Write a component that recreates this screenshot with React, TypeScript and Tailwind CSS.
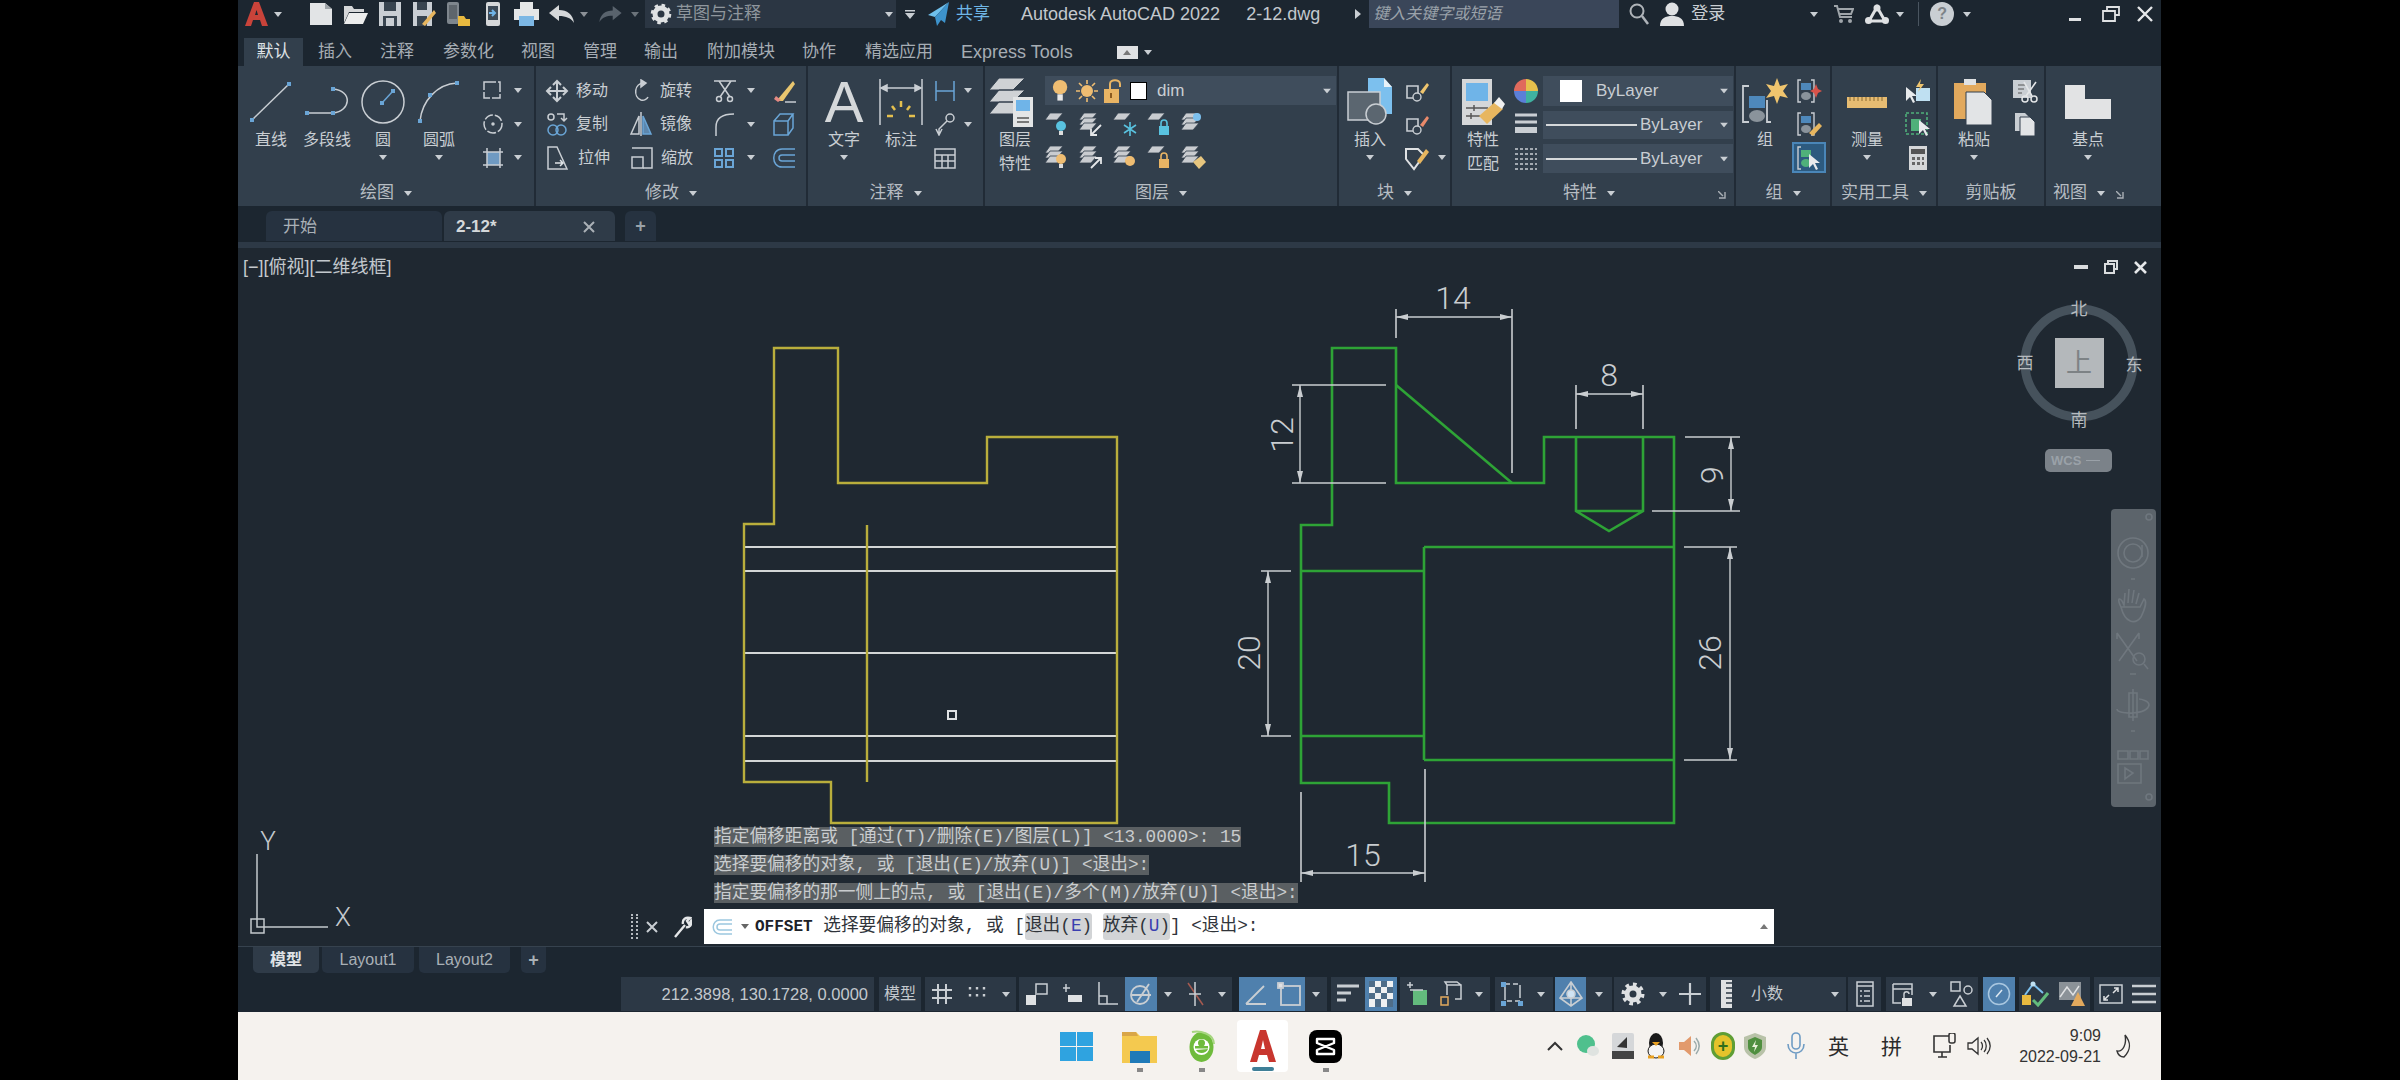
import type { ReactNode } from "react";

const G = "#c9ced3";
const B = "#6aa5d6";

type IcoProps = { w: number; h: number; children: ReactNode; sw?: number };

const Ico = ({ w, h, children, sw = 1.5 }: IcoProps) => (
    <svg width={w} height={h} viewBox={`0 0 ${w} ${h}`} fill="none" stroke={G} strokeWidth={sw} className="shrink-0">
        {children}
    </svg>
);

const Caret = ({ up, c = G }: { up?: boolean; c?: string }) => (
    <svg width="8" height="5" viewBox="0 0 8 5" className="shrink-0">
        <path d={up ? "M0 5 L8 5 L4 0 Z" : "M0 0 L8 0 L4 5 Z"} fill={c} />
    </svg>
);

const Launcher = () => (
    <svg width="8" height="8" viewBox="0 0 8 8" className="shrink-0">
        <path d="M0 0 L5 5 M7 1 L7 7 L1 7" stroke="#aab0b6" strokeWidth="1.4" fill="none" />
    </svg>
);

const Grip = ({ x, y }: { x: number; y: number }) => <rect x={x - 2} y={y - 2} width="4" height="4" fill={B} stroke="none" />;

// ---- draw panel
const LineIco = () => <Ico w={46} h={46}><path d="M4 41 L41 5" /><Grip x={4} y={41} /><Grip x={41} y={5} /></Ico>;
const PolyIco = () => <Ico w={48} h={46}><path d="M4 34 H30 M30 10 C50 12 48 32 30 34" /><Grip x={4} y={34} /><Grip x={30} y={34} /><Grip x={30} y={10} /></Ico>;
const CircleIco = () => <Ico w={46} h={46}><circle cx="23" cy="23" r="21" /><path d="M22 24 L33 12" stroke={B} /><Grip x={22} y={24} /><Grip x={33} y={12} /></Ico>;
const ArcIco = () => <Ico w={44} h={46}><path d="M3 42 C5 22 20 5 40 4" /><Grip x={3} y={42} /><Grip x={13} y={16} /><Grip x={40} y={4} /></Ico>;
const RectIco = () => <Ico w={24} h={24}><path d="M3 3 H19 V19 H3 Z" strokeDasharray="12 2" /></Ico>;
const EllIco = () => <Ico w={24} h={24}><circle cx="12" cy="12" r="9" strokeDasharray="9 2" /><circle cx="12" cy="12" r="1" fill={G} /></Ico>;
const HatchIco = () => <Ico w={24} h={24}><rect x="6" y="6" width="13" height="13" fill="#6f9ac2" stroke="none" /><path d="M2 6 H22 M2 19 H22 M6 2 V22 M19 2 V22" /></Ico>;

// ---- modify panel
const MoveIco = () => <Ico w={24} h={24} sw={2}><path d="M12 2 V22 M2 12 H22 M8 6 L12 2 L16 6 M8 18 L12 22 L16 18 M6 8 L2 12 L6 16 M18 8 L22 12 L18 16" /></Ico>;
const RotateIco = () => <Ico w={24} h={24}><path d="M15 4 C5 4 4 18 12 21 C15 22 18 20 19 18" /><path d="M12 1 L17 4 L12 8 Z" fill={G} /></Ico>;
const TrimIco = () => <Ico w={26} h={24}><path d="M2 2 H24 M7 2 L18 18 M19 2 L8 18" /><circle cx="7" cy="20" r="2.5" /><circle cx="18" cy="20" r="2.5" /></Ico>;
const EraseIco = () => <Ico w={26} h={24}><path d="M7 20 L22 2 L24 5 L12 22 H7 Z" fill="#e9c66f" stroke="none" /><path d="M5 17 L10 21 L7 23 L3 20 Z" fill="#e58a84" stroke="none" /><path d="M14 23 H25" /></Ico>;
const CopyIco = () => <Ico w={24} h={26}><circle cx="6" cy="6" r="3" /><path d="M12 3 H19 V9 M16 7 L19 10 L22 7" /><circle cx="8" cy="19" r="5" stroke={B} /><circle cx="16" cy="19" r="5" stroke={B} /></Ico>;
const MirrorIco = () => <Ico w={24} h={26}><path d="M12 1 V25" /><path d="M10 5 V23 H2 Z" /><path d="M14 5 V23 H22 Z" fill="#5d87ad" stroke={B} /></Ico>;
const FilletIco = () => <Ico w={24} h={26}><path d="M4 25 V16 C4 8 10 3 22 3" /></Ico>;
const SolidIco = () => <Ico w={24} h={26}><path d="M3 10 H17 V24 H3 Z M3 10 L9 3 H22 L17 10 M22 3 V17 L17 24" stroke={B} /></Ico>;
const StretchIco = () => <Ico w={26} h={26}><path d="M3 2 H12 L22 24 H3 Z" /><path d="M10 18 H18 M15 15 L18 18 L15 21" stroke="#dfe3e6" /></Ico>;
const ScaleIco = () => <Ico w={26} h={26}><path d="M3 3 H23 V23 H14" /><rect x="3" y="12" width="11" height="11" /></Ico>;
const ArrayIco = () => <Ico w={24} h={24} sw={2}><g stroke={B}><rect x="3" y="3" width="7" height="7" /><rect x="14" y="3" width="7" height="7" /><rect x="3" y="14" width="7" height="7" /><rect x="14" y="14" width="7" height="7" /></g></Ico>;
const OffsetIco = () => <Ico w={26} h={24}><path d="M24 3 H11 C0 3 0 21 11 21 H24 M24 9 H11 C7 9 7 15 11 15 H24" stroke={B} /></Ico>;

// ---- annotation panel
const DimIco = () => (
    <Ico w={46} h={46}>
        <path d="M2 0 V46 M44 0 V46 M3 9 H43" />
        <path d="M3 9 L9 6 V12 Z M43 9 L37 6 V12 Z" fill={G} />
        <path d="M23 22 V28 M14 27 L17 31 M32 27 L29 31 M9 37 H15 M31 37 H37" stroke="#e5c04e" strokeWidth="2.5" />
    </Ico>
);
const LinDimIco = () => <Ico w={24} h={24}><path d="M3 2 V22 M21 2 V22 M3 12 H21" stroke={B} /></Ico>;
const LeaderIco = () => <Ico w={24} h={24}><circle cx="17" cy="6" r="4" /><path d="M14 9 L6 17 V22 M3 17 L6 23 L9 17" /></Ico>;
const TableIco = () => <Ico w={24} h={24}><path d="M2 3 H22 V22 H2 Z M2 9 H22 M2 15 H22 M9 9 V22 M15 9 V22" /></Ico>;

// ---- layer panel
const LayersBig = () => (
    <svg width="52" height="52" viewBox="0 0 52 52" className="shrink-0">
        <path d="M10 2 H36 L24 14 H0 Z M10 14 H36 L24 26 H0 Z M10 26 H36 L24 38 H0 Z" fill="#cfd2d5" stroke="#323f4c" strokeWidth="1" />
        <rect x="24" y="21" width="20" height="30" fill="#e3e5e6" />
        <rect x="27" y="24" width="14" height="11" fill="#6fb4e8" />
        <path d="M28 42 H40 M28 46 H40" stroke="#555" strokeWidth="1.5" />
    </svg>
);
const Bulb = ({ c = "#efbd72", s = 1 }: { c?: string; s?: number }) => (
    <svg width={18 * s} height={26 * s} viewBox="0 0 18 26" className="shrink-0">
        <circle cx="9" cy="9" r="8" fill={c} />
        <rect x="6" y="17" width="6" height="7" fill="#e8e8e8" />
    </svg>
);
const Sun = () => (
    <svg width="24" height="24" viewBox="0 0 24 24" className="shrink-0">
        <circle cx="12" cy="12" r="6" fill="#efbd72" />
        <path d="M12 1 V5 M12 19 V23 M1 12 H5 M19 12 H23 M4 4 L7 7 M17 17 L20 20 M20 4 L17 7 M7 17 L4 20" stroke="#efbd72" strokeWidth="1.6" />
    </svg>
);
const Lock = ({ c = "#e8b464" }: { c?: string }) => (
    <svg width="22" height="26" viewBox="0 0 22 26" className="shrink-0">
        <rect x="1" y="11" width="15" height="14" fill={c} />
        <path d="M7 11 V6 C7 1 17 1 17 6 V9" stroke={c} strokeWidth="2" fill="none" />
        <rect x="7" y="15" width="2" height="5" fill="#8a5a20" />
    </svg>
);
const Sheets = ({ n = 1 }: { n?: number }) => (
    <g fill="#c9ccd0" stroke="#323f4c" strokeWidth="0.8">
        <path d="M5 2 H18 L12 9 H0 Z" />
        {n > 1 && <path d="M5 7 H18 L12 14 H0 Z" />}
        {n > 2 && <path d="M5 12 H18 L12 19 H0 Z" />}
    </g>
);
const LayerMini = ({ n = 1, children }: { n?: number; children?: ReactNode }) => (
    <svg width="26" height="26" viewBox="0 0 26 26" className="shrink-0">
        <Sheets n={n} />
        {children}
    </svg>
);

const MiniBulb = ({ c }: { c: string }) => <><circle cx="16" cy="15" r="5" fill={c} /><rect x="14" y="20" width="4" height="4" fill="#ddd" /></>;
const MiniArrow = ({ up }: { up?: boolean }) => <path d={up ? "M12 24 L22 14 M16 14 H22 V20" : "M22 14 L12 24 M12 18 V24 H18"} stroke="#e4e6e8" strokeWidth="1.8" fill="none" />;
const MiniFlake = () => <g stroke="#59c3e0" strokeWidth="1.6"><path d="M17 11 V25 M11 14 L23 22 M23 14 L11 22" /></g>;
const MiniLock = ({ c }: { c: string }) => <><rect x="12" y="15" width="10" height="9" fill={c} /><path d="M14 15 V12 C14 8 20 8 20 12 V15" stroke={c} strokeWidth="1.6" fill="none" /></>;

// ---- block / properties / group panels
const InsertIco = () => (
    <svg width="48" height="48" viewBox="0 0 48 48" className="shrink-0">
        <path d="M22 0 H38 L46 9 V36 H22 Z" fill="#7cc0ee" />
        <path d="M38 0 V9 H46" fill="#e8f2f8" />
        <rect x="2" y="14" width="32" height="28" fill="#5b6670" stroke="#c9ced3" strokeWidth="1.5" />
        <circle cx="30" cy="36" r="10" fill="#5b6670" stroke="#c9ced3" strokeWidth="1.5" />
    </svg>
);
const BlockMini = ({ accent }: { accent: string }) => (
    <svg width="26" height="26" viewBox="0 0 26 26" className="shrink-0">
        <path d="M3 8 H14 V20 H3 Z" fill="none" stroke={G} strokeWidth="1.6" />
        <circle cx="13" cy="19" r="4" fill="#323f4c" stroke={G} strokeWidth="1.4" />
        <path d="M16 14 L23 5 L25 7 L19 16 Z" fill={accent} />
    </svg>
);
const MatchIco = () => (
    <svg width="44" height="48" viewBox="0 0 44 48" className="shrink-0">
        <rect x="1" y="1" width="30" height="46" fill="#d5d7d9" />
        <rect x="5" y="5" width="22" height="18" fill="#6fb4e8" />
        <path d="M5 30 H27 M5 38 H20 M13 27 V33 M10 35 V41" stroke="#555" strokeWidth="1.5" />
        <path d="M18 38 L34 24 L42 31 L26 46 Z" fill="#e7b65f" />
        <path d="M33 25 L38 19 L44 26 L41 31 Z" fill="#f0f0f0" />
    </svg>
);
const Wheel = () => (
    <svg width="26" height="26" viewBox="0 0 26 26" className="shrink-0">
        <path d="M13 13 L13 1 A12 12 0 0 1 25 13 Z" fill="#e6c04c" />
        <path d="M13 13 L25 13 A12 12 0 0 1 13 25 Z" fill="#3fb1a0" />
        <path d="M13 13 L13 25 A12 12 0 0 1 1 13 Z" fill="#5b7fd8" />
        <path d="M13 13 L1 13 A12 12 0 0 1 13 1 Z" fill="#e06a5c" />
    </svg>
);
const GroupBig = () => (
    <svg width="48" height="48" viewBox="0 0 48 48" className="shrink-0">
        <path d="M8 8 H2 V44 H8 M26 22 V44 H30" fill="none" stroke={G} strokeWidth="1.8" />
        <rect x="8" y="18" width="16" height="12" fill="#4e88bb" />
        <ellipse cx="16" cy="38" rx="8" ry="6" fill="#8a939b" />
        <path d="M36 0 L39 8 L47 6 L42 13 L47 20 L39 18 L36 26 L33 18 L25 20 L30 13 L25 6 L33 8 Z" fill="#f0c56e" />
    </svg>
);
const GroupMini = ({ a = "#4e88bb", b = "#8a939b", children }: { a?: string; b?: string; children?: ReactNode }) => (
    <svg width="26" height="26" viewBox="0 0 26 26" className="shrink-0">
        <path d="M5 2 H2 V24 H5 M15 2 H18 V24 H15" fill="none" stroke={G} strokeWidth="1.4" />
        <rect x="5" y="5" width="10" height="7" fill={a} />
        <ellipse cx="10" cy="18" rx="5" ry="4" fill={b} />
        {children}
    </svg>
);
const Cursor = ({ x = 0, y = 0 }: { x?: number; y?: number }) => (
    <path transform={`translate(${x} ${y})`} d="M0 0 L0 14 L4 10 L7 16 L9 15 L6 9 L11 9 Z" fill="#e8eaec" />
);

// ---- status bar
const Cell = ({ w, on, cls = "", children }: { w: number; on?: boolean; cls?: string; children?: ReactNode }) => (
    <div style={{ width: w }} className={`h-full flex items-center justify-center shrink-0 ${on ? "bg-[#4f80ad]" : "bg-[#2c3845]"} ${cls}`}>
        {children}
    </div>
);

const BigTool = ({ w, label, label2, caret = true, children }: { w: number; label: string; label2?: string; caret?: boolean; children: ReactNode }) => (
    <div style={{ width: w }} className="flex flex-col items-center pt-[10px] shrink-0">
        <div className="h-[52px] flex items-center justify-center">{children}</div>
        <div className="text-[16px] leading-[24px] text-[#c9ced3] whitespace-nowrap">{label}</div>
        {label2 && <div className="text-[16px] leading-[24px] text-[#c9ced3] whitespace-nowrap">{label2}</div>}
        {caret && !label2 && <div className="h-[10px] flex items-center"><Caret /></div>}
    </div>
);

const Rows = ({ cls = "", children }: { cls?: string; children: ReactNode }) => (
    <div className={`flex flex-col pt-[8px] shrink-0 ${cls}`}>{children}</div>
);
const Row = ({ cls = "", children }: { cls?: string; children?: ReactNode }) => (
    <div className={`h-[33.5px] flex items-center ${cls}`}>{children}</div>
);
const Label = ({ children }: { children: ReactNode }) => (
    <span className="text-[16px] text-[#c9ced3] whitespace-nowrap">{children}</span>
);

const Panel = ({ w, title, caret = true, launcher, last, titleCls = "", children }: { w: number; title: string; caret?: boolean; launcher?: boolean; last?: boolean; titleCls?: string; children: ReactNode }) => (
    <div style={{ width: w }} className={`h-full flex flex-col shrink-0 ${last ? "" : "border-r-2 border-[#212b36]"}`}>
        <div className="h-[116px] flex">{children}</div>
        <div className={`h-[24px] flex items-center justify-center gap-[10px] text-[17px] text-[#b7bdc3] relative pb-[2px] ${titleCls}`}>
            <span>{title}</span>
            {caret && <Caret />}
            {launcher && <div className="absolute right-[8px] top-[9px]"><Launcher /></div>}
        </div>
    </div>
);

const Combo = ({ w, h, cls = "", children }: { w: number; h: number; cls?: string; children: ReactNode }) => (
    <div style={{ width: w, height: h }} className={`bg-[#3f4d5c] flex items-center relative text-[#c9ced3] ${cls}`}>
        {children}
        <div className="absolute right-[5px] top-1/2 -translate-y-1/2"><Caret /></div>
    </div>
);

// ---- the drawing
const Y = "#b9ae3c";
const GR = "#2ea336";
const DIM = "#c9cdd0";

const HDim = ({ x1, x2, y }: { x1: number; x2: number; y: number }) => (
    <g>
        <path d={`M${x1} ${y} H${x2}`} stroke={DIM} strokeWidth="1.4" />
        <path d={`M${x1} ${y} L${x1 + 12} ${y - 3} V${y + 3} Z M${x2} ${y} L${x2 - 12} ${y - 3} V${y + 3} Z`} fill={DIM} />
    </g>
);
const VDim = ({ y1, y2, x }: { y1: number; y2: number; x: number }) => (
    <g>
        <path d={`M${x} ${y1} V${y2}`} stroke={DIM} strokeWidth="1.4" />
        <path d={`M${x} ${y1} L${x - 3} ${y1 + 12} H${x + 3} Z M${x} ${y2} L${x - 3} ${y2 - 12} H${x + 3} Z`} fill={DIM} />
    </g>
);
const DimText = ({ x, y, r, children }: { x: number; y: number; r?: boolean; children: string }) => (
    <text x={x} y={y + 11} textAnchor="middle" fontFamily="Roboto, sans-serif" fontWeight="300" fontSize="32" fill={DIM} stroke="none"
        transform={r ? `rotate(-90 ${x} ${y})` : undefined}>
        {children}
    </text>
);

const Drawing = () => (
    <svg width="1923" height="698" viewBox="238 248 1923 698" fill="none" className="absolute inset-0">
        {/* left view */}
        <g stroke="#d3d6d6" strokeWidth="2">
            <path d="M744 547 H1117 M744 571 H1117 M744 653 H1117 M744 736 H1117 M744 761 H1117" />
        </g>
        <g stroke={Y} strokeWidth="2.4">
            <path d="M774 348 H838 V483 H987 V437 H1117 V823 H831 V782 H744 V524 H774 Z" />
            <path d="M867 525 V782" />
        </g>
        <rect x="948" y="711" width="8" height="8" stroke="#dfe2e4" strokeWidth="2" />

        {/* right view */}
        <g stroke={GR} strokeWidth="2.6">
            <path d="M1332 348 H1396 V483 H1544 V437 H1674 V823 H1389 V783 H1301 V525 H1332 Z" />
            <path d="M1396 385 L1512 483 M1576 437 V511 L1609 531 L1643 511 V437 M1576 511 H1643" />
            <path d="M1424 547 H1674 M1424 760 H1674 M1424 547 V760 M1301 571 H1424 M1301 736 H1424" />
        </g>
        <g stroke={DIM} strokeWidth="1.6">
            <path d="M1396 309 V338 M1512 309 V473 M1576 385 V429 M1643 385 V429" />
            <path d="M1292 385 H1386 M1292 483 H1386 M1685 437 H1740 M1652 511 H1740" />
            <path d="M1684 547 H1737 M1684 760 H1737 M1261 571 H1291 M1261 736 H1291" />
            <path d="M1301 792 V882 M1425 769 V882" />
        </g>
        <HDim x1={1396} x2={1512} y={317} />
        <HDim x1={1576} x2={1643} y={394} />
        <HDim x1={1301} x2={1425} y={873} />
        <VDim y1={385} y2={483} x={1300} />
        <VDim y1={437} y2={511} x={1731} />
        <VDim y1={547} y2={760} x={1730} />
        <VDim y1={571} y2={736} x={1268} />
        <DimText x={1453} y={298}>14</DimText>
        <DimText x={1609} y={375}>8</DimText>
        <DimText x={1363} y={855}>15</DimText>
        <DimText x={1282} y={435} r>12</DimText>
        <DimText x={1712} y={475} r>9</DimText>
        <DimText x={1710} y={653} r>26</DimText>
        <DimText x={1249} y={653} r>20</DimText>

        {/* ucs */}
        <path d="M257 854 V927 H328" stroke="#c4c9cd" strokeWidth="1.5" />
        <rect x="251" y="919" width="13" height="14" stroke="#c4c9cd" strokeWidth="1.5" />
        <text x="268" y="850" textAnchor="middle" fontFamily="Roboto, sans-serif" fontWeight="300" fontSize="26" fill="#c4c9cd">Y</text>
        <text x="343" y="926" textAnchor="middle" fontFamily="Roboto, sans-serif" fontWeight="300" fontSize="26" fill="#c4c9cd">X</text>

        {/* view cube */}
        <circle cx="2079" cy="363" r="54" stroke="#46525c" strokeWidth="9" />
        <rect x="2055" y="338" width="49" height="50" fill="#b4b8bb" />
        <text x="2079" y="372" textAnchor="middle" fontFamily="Noto Sans CJK SC, sans-serif" fontSize="26" fill="#7d8285">上</text>
        <g fontFamily="Noto Sans CJK SC, sans-serif" fontSize="17" fill="#b6bbbf" textAnchor="middle">
            <text x="2079" y="315">北</text>
            <text x="2079" y="426">南</text>
            <text x="2025" y="369">西</text>
            <text x="2134" y="371">东</text>
        </g>
    </svg>
);

const NavBar = () => (
    <div className="absolute left-[1873px] top-[261px] w-[45px] h-[298px] rounded-[4px] bg-[#5c646b] flex flex-col items-center">
        <svg width="45" height="298" viewBox="0 0 45 298" fill="none" stroke="#6f777e" strokeWidth="1.6">
            <circle cx="38" cy="8" r="3" /><circle cx="38" cy="288" r="3" />
            <circle cx="22" cy="44" r="15" /><circle cx="22" cy="44" r="9" /><path d="M31 36 V48" />
            <path d="M20 70 L24 70 M19 165 L25 165 M20 222 L24 222" />
            <path d="M10 98 C6 90 8 88 11 92 L13 96 L14 84 M17 94 L18 80 M21 94 L23 81 M25 95 L28 84 M29 98 L33 90 C36 92 34 100 30 108 C24 116 14 114 10 98 Z" />
            <path d="M6 124 L26 152 M28 124 L8 152 M6 124 L6 130 M28 124 L28 130" />
            <circle cx="28" cy="150" r="6" /><path d="M33 155 L37 160" />
            <path d="M22 180 V212 M18 184 V208 H26 V184 Z M6 200 C6 206 36 206 38 196 C38 192 30 190 28 190" />
            <path d="M7 242 H17 V250 H7 Z M19 242 H27 V250 H19 Z M29 242 H37 V250 H29 Z M7 255 H30 V274 H7 Z M14 259 L22 264 L14 270 Z" />
        </svg>
    </div>
);

export default function App() {
    return (
        <div className="w-[2400px] h-[1080px] bg-black pl-[238px] pr-[239px] overflow-hidden font-['Liberation_Sans','Noto_Sans_CJK_SC',sans-serif]">
            <div className="h-full flex flex-col bg-[#1c2630]">
                {/* quick access + title */}
                <div className="h-[38px] pb-[10px] flex items-center shrink-0 text-[#c9ced3]">
                    <svg width="23" height="24" viewBox="0 0 23 24" className="ml-[7px] shrink-0">
                        <path d="M0 24 L9 0 H14 L23 24 H17 L15 18 H8 L6 24 Z M10 13 H13 L11.5 8 Z" fill="#c9433a" fillRule="evenodd" />
                    </svg>
                    <div className="ml-[6px]"><Caret /></div>
                    <svg width="24" height="22" viewBox="0 0 24 22" className="ml-[27px] shrink-0"><path d="M1 0 H16 L23 6 V22 H1 Z" fill="#e2e4e6" /><path d="M16 0 V6 H23" fill="#9ea4a9" /></svg>
                    <svg width="25" height="20" viewBox="0 0 25 20" className="ml-[10px] shrink-0"><path d="M1 2 H9 L11 5 H21 V8 H6 L1 19 Z" fill="#d5d7d9" /><path d="M6 9 H25 L20 20 H1 Z" fill="#eceded" /></svg>
                    <svg width="24" height="24" viewBox="0 0 24 24" className="ml-[10px] shrink-0"><path d="M1 0 H23 V24 H1 Z" fill="#c9ced3" /><rect x="6" y="0" width="12" height="9" fill="#38444f" /><rect x="5" y="14" width="14" height="10" fill="#38444f" /><rect x="8" y="16" width="8" height="8" fill="#c9ced3" /></svg>
                    <svg width="24" height="24" viewBox="0 0 24 24" className="ml-[10px] shrink-0"><path d="M1 0 H20 V24 H1 Z" fill="#c9ced3" /><rect x="5" y="0" width="10" height="8" fill="#38444f" /><rect x="5" y="14" width="10" height="10" fill="#38444f" /><path d="M10 22 L22 8 L24 11 L13 24 Z" fill="#e7b65f" /></svg>
                    <svg width="24" height="24" viewBox="0 0 24 24" className="ml-[10px] shrink-0"><rect x="1" y="0" width="12" height="22" rx="2" fill="#7e868d" /><rect x="3" y="3" width="8" height="14" fill="#5d656c" /><path d="M12 14 H18 L20 17 H24 V24 H12 Z" fill="#e8b93f" /></svg>
                    <svg width="16" height="24" viewBox="0 0 16 24" className="ml-[15px] shrink-0"><rect x="1" y="0" width="14" height="24" rx="2" fill="#d5d7d9" /><rect x="3" y="4" width="10" height="14" fill="#3d4a57" /><path d="M4 11 H10 M7 8 L10 11 L7 14" stroke="#6fb4e8" strokeWidth="2" fill="none" /></svg>
                    <svg width="25" height="24" viewBox="0 0 25 24" className="ml-[13px] shrink-0"><rect x="6" y="0" width="13" height="7" fill="#e4e6e7" /><rect x="0" y="7" width="25" height="11" fill="#e4e6e7" /><rect x="5" y="14" width="15" height="10" fill="#7cb7e4" /></svg>
                    <svg width="25" height="18" viewBox="0 0 25 18" className="ml-[10px] shrink-0"><path d="M0 8 L10 0 V5 C18 5 24 9 25 18 C22 13 17 11 10 11 V16 Z" fill="#d5d7d9" /></svg>
                    <div className="ml-[6px]"><Caret c="#8b9096" /></div>
                    <svg width="23" height="16" viewBox="0 0 25 18" className="ml-[11px] shrink-0"><path d="M25 8 L15 0 V5 C7 5 1 9 0 18 C3 13 8 11 15 11 V16 Z" fill="#59636d" /></svg>
                    <div className="ml-[9px]"><Caret c="#6b737a" /></div>
                    <div className="ml-[6px] w-[251px] h-[28px] bg-[#2b3643] flex items-center relative">
                        <svg width="22" height="22" viewBox="0 0 22 22" className="ml-[5px] shrink-0"><circle cx="11" cy="11" r="6" fill="none" stroke="#dfe1e3" strokeWidth="5" /><circle cx="11" cy="11" r="8.6" fill="none" stroke="#dfe1e3" strokeWidth="3.4" strokeDasharray="3.4 3.4" /></svg>
                        <span className="ml-[4px] text-[17px] text-[#8f969d]">草图与注释</span>
                        <div className="absolute right-[3px] top-[12px]"><Caret /></div>
                    </div>
                    <svg width="10" height="9" viewBox="0 0 10 9" className="ml-[9px] shrink-0"><path d="M0 0 H10 V1.5 H0 Z M0 3 H10 L5 9 Z" fill={G} /></svg>
                    <svg width="21" height="24" viewBox="0 0 21 24" className="ml-[13px] shrink-0"><path d="M21 0 L0 13 L7 15 Z" fill="#6fc0ec" /><path d="M21 0 L7 15 L9 24 L13 18 L17 21 Z" fill="#3d93cc" /></svg>
                    <span className="ml-[7px] text-[17px] text-[#6fb6e6]">共享</span>
                    <span className="ml-[31px] text-[18px] text-[#c3c8cd] whitespace-nowrap">Autodesk AutoCAD 2022</span>
                    <span className="ml-[26px] text-[18px] text-[#c3c8cd] whitespace-nowrap">2-12.dwg</span>
                    <svg width="6" height="10" viewBox="0 0 6 10" className="ml-[35px] shrink-0"><path d="M0 0 L6 5 L0 10 Z" fill={G} /></svg>
                    <div className="ml-[8px] w-[250px] h-[28px] bg-[#3a4659] flex items-center">
                        <span className="ml-[4px] text-[16px] italic text-[#9aa2aa]">键入关键字或短语</span>
                    </div>
                    <svg width="20" height="22" viewBox="0 0 20 22" className="ml-[10px] shrink-0"><circle cx="8" cy="8" r="6.5" fill="none" stroke="#aeb3b8" strokeWidth="2" /><path d="M13 13 L19 21" stroke="#aeb3b8" strokeWidth="2.5" /></svg>
                    <svg width="24" height="24" viewBox="0 0 24 24" className="ml-[11px] shrink-0"><circle cx="12" cy="7" r="6.5" fill="#dfe1e3" /><path d="M0 24 C0 16 6 14 12 14 C18 14 24 16 24 24 Z" fill="#dfe1e3" /></svg>
                    <span className="ml-[7px] text-[17px] text-[#c9ced3]">登录</span>
                    <div className="ml-[85px]"><Caret /></div>
                    <svg width="20" height="20" viewBox="0 0 20 20" className="ml-[16px] shrink-0"><path d="M0 2 H3 L6 13 H18 M4 5 H19 L17 10 H5" stroke="#9fa5aa" strokeWidth="2" fill="none" /><circle cx="7" cy="17" r="2" fill="#9fa5aa" /><circle cx="16" cy="17" r="2" fill="#9fa5aa" /></svg>
                    <svg width="24" height="20" viewBox="0 0 24 20" className="ml-[11px] shrink-0"><path d="M12 3 L4 17 H20 Z" fill="none" stroke="#dfe1e3" strokeWidth="3" /><circle cx="12" cy="4" r="3.5" fill="#dfe1e3" /><circle cx="3.5" cy="16.5" r="3.5" fill="#dfe1e3" /><circle cx="20.5" cy="16.5" r="3.5" fill="#dfe1e3" /></svg>
                    <div className="ml-[7px]"><Caret /></div>
                    <div className="ml-[14px] w-[1px] h-[24px] bg-[#4a5560]" />
                    <div className="ml-[11px] w-[24px] h-[24px] rounded-full bg-[#c9ced3] flex items-center justify-center text-[16px] font-bold text-[#7d8388]">?</div>
                    <div className="ml-[9px]"><Caret /></div>
                    <div className="ml-[98px] w-[12px] h-[3px] bg-[#dfe1e3] mt-[10px]" />
                    <svg width="18" height="16" viewBox="0 0 18 16" className="ml-[21px] shrink-0"><path d="M5 4 V1 H17 V9 H13 M1 5 H13 V15 H1 Z" fill="none" stroke="#dfe1e3" strokeWidth="1.8" /></svg>
                    <svg width="16" height="16" viewBox="0 0 16 16" className="ml-[17px] shrink-0"><path d="M1 1 L15 15 M15 1 L1 15" stroke="#e5e7e9" strokeWidth="2.4" /></svg>
                </div>

                {/* ribbon tabs */}
                <div className="h-[28px] flex items-center shrink-0 text-[17px] text-[#a6adb4] whitespace-nowrap">
                    <div className="ml-[6px] w-[59px] h-full bg-[#323f4c] text-[#dfe2e5] flex items-center justify-center">默认</div>
                    <span className="ml-[15px]">插入</span>
                    <span className="ml-[28px]">注释</span>
                    <span className="ml-[29px]">参数化</span>
                    <span className="ml-[27px]">视图</span>
                    <span className="ml-[28px]">管理</span>
                    <span className="ml-[27px]">输出</span>
                    <span className="ml-[29px]">附加模块</span>
                    <span className="ml-[27px]">协作</span>
                    <span className="ml-[29px]">精选应用</span>
                    <span className="ml-[28px] text-[18px]">Express Tools</span>
                    <div className="ml-[44px] w-[21px] h-[13px] bg-[#dfe1e3] flex items-center justify-center"><Caret up c="#777" /></div>
                    <div className="ml-[6px]"><Caret /></div>
                </div>

                {/* ribbon */}
                <div className="h-[140px] flex bg-[#323f4c] shrink-0">
                    <Panel w={298} title="绘图">
                        <div className="w-[5px]" />
                        <BigTool w={56} label="直线" caret={false}><LineIco /></BigTool>
                        <BigTool w={56} label="多段线" caret={false}><PolyIco /></BigTool>
                        <BigTool w={56} label="圆"><CircleIco /></BigTool>
                        <BigTool w={56} label="圆弧" ><ArcIco /></BigTool>
                        <Rows cls="ml-[14px]">
                            <Row cls="gap-[9px]"><RectIco /><Caret /></Row>
                            <Row cls="gap-[9px]"><EllIco /><Caret /></Row>
                            <Row cls="gap-[9px]"><HatchIco /><Caret /></Row>
                        </Rows>
                    </Panel>
                    <Panel w={272} title="修改">
                        <Rows cls="ml-[9px] w-[84px]">
                            <Row cls="gap-[7px]"><MoveIco /><Label>移动</Label></Row>
                            <Row cls="gap-[7px]"><CopyIco /><Label>复制</Label></Row>
                            <Row cls="gap-[7px]"><StretchIco /><Label>拉伸</Label></Row>
                        </Rows>
                        <Rows cls="w-[83px]">
                            <Row cls="gap-[7px]"><RotateIco /><Label>旋转</Label></Row>
                            <Row cls="gap-[7px]"><MirrorIco /><Label>镜像</Label></Row>
                            <Row cls="gap-[6px]"><ScaleIco /><Label>缩放</Label></Row>
                        </Rows>
                        <Rows cls="w-[59px]">
                            <Row cls="gap-[9px]"><TrimIco /><Caret /></Row>
                            <Row cls="gap-[11px]"><FilletIco /><Caret /></Row>
                            <Row cls="gap-[11px]"><ArrayIco /><Caret /></Row>
                        </Rows>
                        <Rows>
                            <Row><EraseIco /></Row>
                            <Row><SolidIco /></Row>
                            <Row><OffsetIco /></Row>
                        </Rows>
                    </Panel>
                    <Panel w={177} title="注释">
                        <div className="w-[8px]" />
                        <BigTool w={56} label="文字">
                            <span className="text-[58px] leading-none text-[#d5d8da] font-['Liberation_Sans',sans-serif]">A</span>
                        </BigTool>
                        <BigTool w={58} label="标注" caret={false}><DimIco /></BigTool>
                        <Rows cls="ml-[3px]">
                            <Row cls="gap-[7px]"><LinDimIco /><Caret /></Row>
                            <Row cls="gap-[7px]"><LeaderIco /><Caret /></Row>
                            <Row><TableIco /></Row>
                        </Rows>
                    </Panel>
                    <Panel w={354} title="图层">
                        <div className="w-[4px]" />
                        <BigTool w={52} label="图层" label2="特性"><LayersBig /></BigTool>
                        <div className="ml-[4px] pt-[10px] flex flex-col">
                            <Combo w={291} h={29}>
                                <div className="w-[30px] flex justify-center"><Bulb s={0.9} /></div>
                                <Sun />
                                <div className="ml-[4px]"><Lock /></div>
                                <div className="ml-[5px] w-[17px] h-[18px] bg-white border border-black" />
                                <span className="ml-[10px] text-[17px]">dim</span>
                            </Combo>
                            <div className="h-[33.5px] mt-[2px] flex items-center gap-[8px]">
                                <LayerMini><MiniBulb c="#59c3e0" /></LayerMini>
                                <LayerMini n={3}><MiniArrow /></LayerMini>
                                <LayerMini><MiniFlake /></LayerMini>
                                <LayerMini><MiniLock c="#59c3e0" /></LayerMini>
                                <LayerMini n={3}><circle cx="16" cy="6" r="4" fill="#7cc0ee" /></LayerMini>
                            </div>
                            <div className="h-[33.5px] flex items-center gap-[8px]">
                                <LayerMini n={3}><MiniBulb c="#efbd72" /></LayerMini>
                                <LayerMini n={3}><MiniArrow up /></LayerMini>
                                <LayerMini n={3}><circle cx="17" cy="17" r="5" fill="#efbd72" /></LayerMini>
                                <LayerMini><MiniLock c="#e8b464" /></LayerMini>
                                <LayerMini n={3}><path d="M12 18 L20 12 L25 18 L18 25 Z" fill="#e7c67f" /></LayerMini>
                            </div>
                        </div>
                    </Panel>
                    <Panel w={113} title="块">
                        <div className="w-[3px]" />
                        <BigTool w={56} label="插入"><InsertIco /></BigTool>
                        <Rows cls="ml-[6px]">
                            <Row><BlockMini accent="#efc56e" /></Row>
                            <Row><BlockMini accent="#e98a6b" /></Row>
                            <Row cls="gap-[8px]">
                                <svg width="26" height="26" viewBox="0 0 26 26" className="shrink-0"><path d="M2 4 H14 L20 10 L10 24 L2 14 Z" fill="none" stroke="#dfe1e3" strokeWidth="2" /><path d="M13 16 L22 4 L25 7 L16 19 Z" fill="#e7b65f" /></svg>
                                <Caret />
                            </Row>
                        </Rows>
                    </Panel>
                    <Panel w={284} title="特性" launcher titleCls="pr-[8px]">
                        <div className="w-[6px]" />
                        <BigTool w={50} label="特性" label2="匹配"><MatchIco /></BigTool>
                        <Rows cls="ml-[3px] w-[30px] items-center">
                            <Row><Wheel /></Row>
                            <Row><Ico w={24} h={24} sw={3}><path d="M1 3 H23 M1 10 H23" /><path d="M1 18 H23" strokeWidth="6" /></Ico></Row>
                            <Row><Ico w={24} h={24} sw={1.5}><path d="M1 3 H23 M1 8 H23 M1 13 H23 M1 18 H23 M1 23 H23" strokeDasharray="3 2" /></Ico></Row>
                        </Rows>
                        <div className="ml-[2px] pt-[10px] flex flex-col gap-[5px]">
                            <Combo w={190} h={30}>
                                <div className="ml-[17px] w-[22px] h-[22px] bg-white" />
                                <span className="ml-[14px] text-[17px]">ByLayer</span>
                            </Combo>
                            <Combo w={190} h={28}>
                                <div className="ml-[3px] w-[91px] h-[2px] bg-[#d5d8da]" />
                                <span className="ml-[3px] text-[17px]">ByLayer</span>
                            </Combo>
                            <Combo w={190} h={29}>
                                <div className="ml-[3px] w-[91px] h-[2px] bg-[#d5d8da]" />
                                <span className="ml-[3px] text-[17px]">ByLayer</span>
                            </Combo>
                        </div>
                    </Panel>
                    <Panel w={96} title="组">
                        <div className="w-[4px]" />
                        <BigTool w={50} label="组" caret={false}><GroupBig /></BigTool>
                        <Rows cls="ml-[2px] w-[34px] items-center">
                            <Row><GroupMini><g fill="#d9534a"><path d="M20 6 L22 11 L26 13 L22 15 L20 20 L18 15 L14 13 L18 11 Z" /></g></GroupMini></Row>
                            <Row><GroupMini><path d="M13 22 L23 12 L26 15 L17 25 Z" fill="#e7b65f" /></GroupMini></Row>
                            <div className="w-[34px] h-[31px] mt-[1px] border-2 border-[#4a86b8] bg-[#2d5a7f] flex items-center justify-center">
                                <svg width="26" height="26" viewBox="0 0 26 26" className="shrink-0">
                                    <path d="M5 2 H2 V24 H5" fill="none" stroke={G} strokeWidth="1.4" />
                                    <rect x="5" y="5" width="10" height="7" fill="#4fb07a" />
                                    <ellipse cx="10" cy="18" rx="5" ry="4" fill="#4fb07a" />
                                    <Cursor x={13} y={9} />
                                </svg>
                            </div>
                        </Rows>
                    </Panel>
                    <Panel w={106} title="实用工具" titleCls="gap-[6px]">
                        <div className="w-[5px]" />
                        <BigTool w={60} label="测量">
                            <svg width="40" height="11" viewBox="0 0 40 11" className="shrink-0">
                                <rect width="40" height="11" fill="#e7bc72" />
                                <path d="M3 0 V4 M7 0 V4 M11 0 V4 M15 0 V4 M19 0 V4 M23 0 V4 M27 0 V4 M31 0 V4 M35 0 V4" stroke="#8a6a30" strokeWidth="1" />
                            </svg>
                        </BigTool>
                        <Rows cls="ml-[7px] w-[28px] items-center">
                            <Row>
                                <svg width="26" height="26" viewBox="0 0 26 26" className="shrink-0"><Cursor x={1} y={9} /><rect x="11" y="10" width="14" height="13" fill="#bfe0f2" /><path d="M16 1 L11 9 H15 L13 14 L19 6 H15 Z" fill="#efc56e" /></svg>
                            </Row>
                            <Row>
                                <svg width="26" height="26" viewBox="0 0 26 26" className="shrink-0"><rect x="1" y="2" width="21" height="21" fill="none" stroke="#4fb07a" strokeWidth="1.6" strokeDasharray="3 2" /><rect x="6" y="8" width="10" height="12" fill="#4fb07a" /><Cursor x={14} y={9} /></svg>
                            </Row>
                            <Row>
                                <svg width="18" height="24" viewBox="0 0 18 24" className="shrink-0"><rect width="18" height="24" fill="#d5d7d9" /><rect x="2" y="3" width="14" height="5" fill="#555" /><path d="M3 11 H6 V14 H3 Z M8 11 H11 V14 H8 Z M13 11 H15 V14 H13 Z M3 16 H6 V19 H3 Z M8 16 H11 V19 H8 Z M13 16 H15 V19 H13 Z" fill="#666" /></svg>
                            </Row>
                        </Rows>
                    </Panel>
                    <Panel w={108} title="剪贴板" caret={false}>
                        <div className="w-[10px]" />
                        <BigTool w={52} label="粘贴">
                            <svg width="40" height="46" viewBox="0 0 40 46" className="shrink-0">
                                <rect x="0" y="4" width="32" height="36" fill="#e2a95d" />
                                <rect x="10" y="0" width="12" height="6" fill="#dfe1e3" />
                                <path d="M12 13 H30 L38 21 V46 H12 Z" fill="#e2e4e6" stroke="#323f4c" />
                            </svg>
                        </BigTool>
                        <Rows cls="ml-[10px] w-[30px] items-center">
                            <Row>
                                <svg width="26" height="26" viewBox="0 0 26 26" className="shrink-0"><rect x="1" y="2" width="18" height="18" fill="#c9ced3" /><path d="M6 7 H14 M6 11 H12 M6 15 H10" stroke="#555" /><path d="M12 4 L20 18 M24 4 L14 18" stroke="#e4e6e8" strokeWidth="1.6" /><circle cx="13" cy="21" r="3" fill="none" stroke="#e4e6e8" strokeWidth="1.5" /><circle cx="22" cy="21" r="3" fill="none" stroke="#e4e6e8" strokeWidth="1.5" /></svg>
                            </Row>
                            <Row>
                                <svg width="22" height="24" viewBox="0 0 22 24" className="shrink-0"><path d="M1 1 H11 L15 5 V19 H1 Z" fill="#c9ced3" /><path d="M6 5 H16 L21 10 V24 H6 Z" fill="#e2e4e6" stroke="#323f4c" /></svg>
                            </Row>
                        </Rows>
                    </Panel>
                    <Panel w={115} title="视图" launcher last titleCls="justify-start pl-[7px] [&>div.absolute]:right-[37px]">
                        <div className="w-[12px]" />
                        <BigTool w={60} label="基点">
                            <svg width="46" height="34" viewBox="0 0 46 34" className="shrink-0"><path d="M0 0 H20 V14 H46 V34 H0 Z" fill="#e2e3e4" /></svg>
                        </BigTool>
                    </Panel>
                </div>

                {/* document tabs */}
                <div className="h-[36px] flex items-end pb-[1px] shrink-0">
                    <div className="ml-[28px] w-[176px] h-[30px] bg-[#263240] rounded-t-[6px] flex items-center pl-[17px] pt-[2px] text-[17px] text-[#a9b0b6]">开始</div>
                    <div className="ml-[2px] w-[171px] h-[30px] bg-[#2f3b48] rounded-t-[6px] flex items-center text-[17px] font-bold text-[#d5d8da] relative">
                        <span className="ml-[12px] pt-[2px]">2-12*</span>
                        <svg width="12" height="12" viewBox="0 0 12 12" className="absolute right-[20px] top-[10px]"><path d="M1 1 L11 11 M11 1 L1 11" stroke="#aab0b6" strokeWidth="2" /></svg>
                    </div>
                    <div className="ml-[10px] w-[31px] h-[30px] bg-[#263240] rounded-t-[6px] flex items-center justify-center text-[18px] font-bold text-[#9aa2a9]">+</div>
                </div>
                <div className="h-[6px] bg-[#2d3946] shrink-0" />

                {/* canvas */}
                <div className="h-[698px] relative bg-[#1f2831] shrink-0">
                    <Drawing />
                    <div className="absolute left-[5px] top-[6px] text-[18px] text-[#c3c8cd] whitespace-nowrap">[−][俯视][二维线框]</div>
                    <div className="absolute left-[1836px] top-[12px] flex items-center gap-[16px]">
                        <div className="w-[14px] h-[4px] bg-[#d9dcde]" />
                        <svg width="14" height="14" viewBox="0 0 14 14"><path d="M4 3 V1 H13 V9 H11 M1 4 H10 V13 H1 Z" fill="none" stroke="#d9dcde" strokeWidth="2" /></svg>
                        <svg width="13" height="13" viewBox="0 0 13 13"><path d="M1 1 L12 12 M12 1 L1 12" stroke="#e5e7e9" strokeWidth="2.6" /></svg>
                    </div>
                    <div className="absolute left-[1807px] top-[201px] w-[67px] h-[23px] rounded-[5px] bg-[#7b8289] flex items-center text-[13px] font-bold text-[#9aa1a8] pl-[6px]">
                        WCS<span className="ml-[5px] w-[14px] h-[1px] bg-[#9aa1a8]" />
                    </div>
                    <NavBar />

                    {/* command history */}
                    <div className="absolute left-[476px] top-[579px] flex flex-col items-start gap-[8px] text-[17.7px] leading-[20px] text-[#c9ccce] whitespace-pre font-['Liberation_Mono','Noto_Sans_CJK_SC',monospace]">
                        <div className="h-[20px] bg-[#5a5f62]">指定偏移距离或 [通过(T)/删除(E)/图层(L)] &lt;13.0000&gt;: 15</div>
                        <div className="h-[20px] bg-[#5a5f62]">选择要偏移的对象, 或 [退出(E)/放弃(U)] &lt;退出&gt;:</div>
                        <div className="h-[20px] bg-[#5a5f62]">指定要偏移的那一侧上的点, 或 [退出(E)/多个(M)/放弃(U)] &lt;退出&gt;:</div>
                    </div>

                    {/* command line */}
                    <div className="absolute left-[393px] top-[661px] h-[35px] flex items-center">
                        <div className="w-[7px] h-[25px] border-x-2 border-dotted border-[#b5babf]" />
                        <svg width="12" height="12" viewBox="0 0 12 12" className="ml-[8px]"><path d="M1 1 L11 11 M11 1 L1 11" stroke="#c9ced3" strokeWidth="2" /></svg>
                        <svg width="18" height="22" viewBox="0 0 18 22" className="ml-[16px]"><path d="M1 21 L11 9 M9 8 C8 3 12 1 16 2 L13 5 L15 8 L17 5 C18 9 15 12 12 11" stroke="#e4e6e8" strokeWidth="2.4" fill="none" /></svg>
                        <div className="ml-[12px] w-[1070px] h-full bg-white flex items-center relative text-[17.7px] text-[#30343a] whitespace-pre font-['Liberation_Mono','Noto_Sans_CJK_SC',monospace]">
                            <svg width="22" height="18" viewBox="0 0 22 18" className="ml-[7px] shrink-0"><path d="M21 2 H9 C0 2 0 16 9 16 H21 M21 6 H9 C5 6 5 12 9 12 H21" stroke="#9cc7df" strokeWidth="1.5" fill="none" /></svg>
                            <div className="ml-[8px]"><Caret c="#666" /></div>
                            <span className="ml-[6px] font-bold text-[16px] text-[#1c2128]">OFFSET</span>
                            <span> 选择要偏移的对象, 或 [</span>
                            <span className="bg-[#d2d4d6] rounded-[3px]">退出(<span className="text-[#3a3fb0]">E</span>)</span>
                            <span> </span>
                            <span className="bg-[#d2d4d6] rounded-[3px]">放弃(<span className="text-[#3a3fb0]">U</span>)</span>
                            <span>] &lt;退出&gt;:</span>
                            <div className="absolute right-[6px] top-[15px]"><Caret up c="#777" /></div>
                        </div>
                    </div>
                </div>

                {/* layout tabs */}
                <div className="h-[31px] flex items-start border-t border-[#36424e] shrink-0 text-[16px] text-[#a9b0b6]">
                    <div className="ml-[15px] w-[66px] h-[26px] bg-[#2f3b48] rounded-b-[5px] flex items-center justify-center font-bold text-[#dfe2e5]">模型</div>
                    <div className="ml-[3px] w-[92px] h-[26px] bg-[#263240] rounded-b-[5px] flex items-center justify-center">Layout1</div>
                    <div className="ml-[5px] w-[91px] h-[26px] bg-[#263240] rounded-b-[5px] flex items-center justify-center">Layout2</div>
                    <div className="ml-[11px] w-[25px] h-[26px] bg-[#263240] rounded-b-[5px] flex items-center justify-center font-bold text-[18px]">+</div>
                </div>

                {/* status bar */}
                <div className="h-[35px] flex shrink-0 pl-[383px] pb-[1px] text-[16px] text-[#c3c8cd]">
                    <Cell w={253} cls="justify-end pr-[6px] whitespace-nowrap text-[16.5px]">212.3898, 130.1728, 0.0000</Cell>
                    <Cell w={42} cls="ml-[5px]">模型</Cell>
                    <Cell w={34} cls="ml-[4px]"><Ico w={22} h={22} sw={2}><path d="M7 1 V21 M15 1 V21 M1 7 H21 M1 15 H21" /></Ico></Cell>
                    <Cell w={36}><Ico w={20} h={20} sw={2.4}><path d="M3 3 V17 M10 3 V17 M17 3 V17" strokeDasharray="2.4 4.6" /></Ico></Cell>
                    <Cell w={21}><Caret /></Cell>
                    <Cell w={36} cls="ml-[3px]"><Ico w={24} h={24}><rect x="1" y="13" width="10" height="10" fill="#dfe1e3" stroke="none" /><path d="M11 13 V2 H22 V12 H12" /></Ico></Cell>
                    <Cell w={34}><Ico w={24} h={24}><path d="M3 6 H10 M6 2 V10" /><rect x="8" y="13" width="14" height="7" fill="#dfe1e3" stroke="none" /></Ico></Cell>
                    <Cell w={36}><Ico w={24} h={26}><path d="M4 1 V23 H23 M4 15 H12 V23" /></Ico></Cell>
                    <Cell w={32} on><Ico w={24} h={24} sw={1.8}><circle cx="11" cy="13" r="9" /><path d="M8 20 L20 2 M3 13 H22" /></Ico></Cell>
                    <Cell w={21}><Caret /></Cell>
                    <Cell w={33}><Ico w={20} h={26}><path d="M3 2 L18 24" stroke="#a65a50" /><path d="M10 1 V25 M4 13 H16" /></Ico></Cell>
                    <Cell w={21}><Caret /></Cell>
                    <Cell w={7} cls="bg-transparent!" />
                    <Cell w={34} on><Ico w={24} h={24} sw={1.8}><path d="M2 22 H22 M2 22 L20 4" /></Ico></Cell>
                    <Cell w={32} on><Ico w={26} h={26} sw={1.8}><rect x="5" y="5" width="19" height="19" /><rect x="2" y="2" width="5" height="5" fill="#dfe1e3" /></Ico></Cell>
                    <Cell w={22}><Caret /></Cell>
                    <Cell w={34} cls="ml-[4px]"><Ico w={24} h={22} sw={3}><path d="M1 3 H23 M1 10 H15 M1 17 H10" /></Ico></Cell>
                    <Cell w={32} on>
                        <svg width="24" height="26" viewBox="0 0 24 26" className="shrink-0"><rect width="24" height="26" fill="#f0f1f2" /><path d="M0 0 H6 V6 H12 V0 H18 V6 H24 V12 H18 V6 H12 V12 H6 V6 H0 Z M0 12 H6 V18 H12 V12 H18 V18 H24 V26 H18 V18 H12 V26 H6 V18 H0 Z" fill="#4f6d88" /></svg>
                    </Cell>
                    <Cell w={34} cls="ml-[3px]"><Ico w={24} h={26}><path d="M2 4 H8 M5 1 V7" /><rect x="8" y="9" width="14" height="15" fill="#63bb7d" stroke="none" /><path d="M5 9 H18" /></Ico></Cell>
                    <Cell w={34}><Ico w={24} h={26}><path d="M8 4 H22 V18 H16 M8 4 V14 M22 4 L18 1 H6 L8 4" /><rect x="2" y="16" width="7" height="8" stroke="#e2a95d" /></Ico></Cell>
                    <Cell w={22}><Caret /></Cell>
                    <Cell w={34} cls="ml-[5px]"><Ico w={24} h={26}><path d="M5 3 H20 V20 H5 Z M5 10 V16 M20 8 V14" strokeDasharray="5 3" /><path d="M1 1 H6 V6 H1 Z M1 20 H6 V25 H1 Z M18 20 H23 V25 H18 Z" fill="#6aa5d6" stroke="none" /></Ico></Cell>
                    <Cell w={24}><Caret /></Cell>
                    <Cell w={31} cls="ml-[2px]" on><Ico w={26} h={26} sw={1.6}><path d="M13 1 L24 17 L13 25 L2 17 Z M13 1 V25 M2 17 H24" /><circle cx="13" cy="13" r="4" fill="#cfe3f3" /></Ico></Cell>
                    <Cell w={26}><Caret /></Cell>
                    <Cell w={38} cls="ml-[2px]">
                        <svg width="24" height="24" viewBox="0 0 24 24"><circle cx="12" cy="12" r="6" fill="none" stroke="#dfe1e3" strokeWidth="5" /><circle cx="12" cy="12" r="9.5" fill="none" stroke="#dfe1e3" strokeWidth="4" strokeDasharray="3.6 3.8" /></svg>
                    </Cell>
                    <Cell w={21}><Caret /></Cell>
                    <Cell w={33}><Ico w={24} h={24} sw={2.2}><path d="M12 1 V23 M1 12 H23" /></Ico></Cell>
                    <Cell w={136} cls="ml-[4px] justify-start relative">
                        <svg width="14" height="28" viewBox="0 0 14 28" className="ml-[11px] shrink-0"><rect width="11" height="28" fill="#dfe1e3" /><path d="M5 3 H11 M5 8 H11 M5 13 H11 M5 18 H11 M5 23 H11" stroke="#2c3845" strokeWidth="1.6" /></svg>
                        <span className="ml-[16px]">小数</span>
                        <div className="absolute right-[7px] top-[15px]"><Caret /></div>
                    </Cell>
                    <Cell w={33} cls="ml-[2px]"><Ico w={18} h={26}><path d="M1 1 H17 V25 H1 Z M1 5 H17 M4 10 H6 M8 10 H14 M4 15 H6 M8 15 H14 M4 20 H6 M8 20 H14" /></Ico></Cell>
                    <Cell w={36} cls="ml-[5px]"><Ico w={26} h={26}><path d="M2 3 H21 V14 M2 3 V22 H10 M2 8 H21" /><rect x="11" y="17" width="10" height="8" fill="#dfe1e3" stroke="none" /><path d="M13 17 V13 C13 10 18 10 18 13" /></Ico></Cell>
                    <Cell w={22}><Caret /></Cell>
                    <Cell w={34}><Ico w={24} h={26}><rect x="2" y="1" width="9" height="9" /><circle cx="19" cy="9" r="4" /><path d="M11 15 L17 25 H5 Z" /></Ico></Cell>
                    <Cell w={32} on cls="ml-[5px]"><Ico w={24} h={24}><circle cx="12" cy="12" r="10.5" stroke="#a9c7e0" /><path d="M9 15 L15 8" stroke="#dfe9f2" /></Ico></Cell>
                    <Cell w={4} cls="bg-transparent!" />
                    <Cell w={32}>
                        <svg width="28" height="26" viewBox="0 0 28 26"><path d="M12 3 L4 14 M12 3 L22 12" stroke="#7cc0ee" strokeWidth="2" /><circle cx="12" cy="3" r="2.5" fill="#bfe0f2" /><rect x="1" y="14" width="9" height="10" fill="#e8b93f" /><path d="M12 19 L17 24 L27 12" stroke="#63bb7d" strokeWidth="3" fill="none" /></svg>
                    </Cell>
                    <Cell w={39}>
                        <svg width="28" height="26" viewBox="0 0 28 26"><rect x="2" y="1" width="22" height="18" fill="#8b9298" /><path d="M3 16 L10 6 L16 14 L22 5" stroke="#dfe1e3" fill="none" strokeWidth="1.5" /><path d="M14 25 L21 11 L28 25 Z" fill="#e2a95d" /></svg>
                    </Cell>
                    <Cell w={34} cls="ml-[4px]"><Ico w={24} h={20}><rect x="1" y="1" width="22" height="18" /><path d="M14 9 L19 4 M15 4 H19 V8 M10 11 L5 16 M5 12 V16 H9" stroke="#dfe1e3" /></Ico></Cell>
                    <Cell w={32}><Ico w={26} h={22} sw={2.6}><path d="M1 3 H25 M1 11 H25 M1 19 H25" /></Ico></Cell>
                </div>

                {/* windows taskbar */}
                <div className="h-[68px] flex items-center bg-[#f5f2ee] shrink-0">
                    <svg width="33" height="33" viewBox="0 0 33 33" className="ml-[822px] shrink-0">
                        <path d="M0 2 H16 V16 H0 Z M17 2 H33 V16 H17 Z M0 17 H16 V31 H0 Z M17 17 H33 V31 H17 Z" fill="#2fa3e0" />
                    </svg>
                    <div className="relative ml-[29px] shrink-0 flex flex-col items-center">
                        <svg width="35" height="33" viewBox="0 0 35 33"><path d="M0 2 H14 L18 6 H35 V33 H0 Z" fill="#f4c94f" /><rect x="8" y="21" width="20" height="12" fill="#1f7ab8" /><path d="M0 2 H14 L16 6 H0 Z" fill="#d9a648" /></svg>
                        <div className="absolute -bottom-[9px] w-[6px] h-[4px] bg-[#888]" />
                    </div>
                    <div className="relative ml-[31px] shrink-0 flex flex-col items-center">
                        <svg width="27" height="33" viewBox="0 0 27 33">
                            <ellipse cx="13.5" cy="17" rx="12" ry="15" fill="#6fbb3c" />
                            <path d="M4 2 C12 0 26 4 26 14" stroke="#a6d67f" strokeWidth="2" fill="none" />
                            <circle cx="13.5" cy="17" r="8" fill="#fff" />
                            <path d="M7 16 H20 V18 H7 Z M20 19 C18 24 10 24 8 20" fill="#6fbb3c" />
                            <circle cx="13.5" cy="13" r="3.5" fill="#6fbb3c" />
                            <rect x="7" y="16" width="13" height="2.5" fill="#6fbb3c" />
                        </svg>
                        <div className="absolute -bottom-[9px] w-[6px] h-[4px] bg-[#888]" />
                    </div>
                    <div className="ml-[22px] w-[51px] h-[52px] rounded-[4px] bg-white flex flex-col items-center justify-center relative shrink-0">
                        <svg width="26" height="32" viewBox="0 0 26 32"><path d="M0 32 L10 0 H16 L26 32 H19 L17 25 H9 L7 32 Z M11 19 H15 L13 10 Z" fill="#c8362e" fillRule="evenodd" /></svg>
                        <div className="absolute bottom-[1px] w-[22px] h-[4px] rounded-[2px] bg-[#3f7f97]" />
                    </div>
                    <div className="relative ml-[21px] w-[33px] h-[33px] rounded-[8px] bg-black flex items-center justify-center shrink-0">
                        <svg width="21" height="21" viewBox="0 0 21 21"><path d="M2 3 H19 V7 L2 14 V18 H19 V14 L2 7 Z" fill="none" stroke="#fff" strokeWidth="2.4" strokeLinejoin="round" /></svg>
                        <div className="absolute -bottom-[9px] w-[6px] h-[4px] bg-[#888]" />
                    </div>

                    <svg width="16" height="10" viewBox="0 0 16 10" className="ml-[205px] shrink-0"><path d="M1 9 L8 2 L15 9" stroke="#333" strokeWidth="2" fill="none" /></svg>
                    <svg width="22" height="22" viewBox="0 0 22 22" className="ml-[14px] shrink-0"><ellipse cx="9" cy="9" rx="9" ry="9" fill="#4fc08d" /><ellipse cx="16" cy="16" rx="6" ry="5" fill="#dfe3e0" /></svg>
                    <svg width="22" height="26" viewBox="0 0 22 26" className="ml-[13px] shrink-0"><rect width="22" height="26" rx="2" fill="#d5d7d9" /><path d="M5 14 L15 4 V15 Z" fill="#333" /><rect y="18" width="22" height="8" fill="#444" /></svg>
                    <svg width="22" height="26" viewBox="0 0 22 26" className="ml-[11px] shrink-0"><ellipse cx="11" cy="10" rx="7" ry="10" fill="#1a1a1a" /><ellipse cx="11" cy="18" rx="8" ry="7" fill="#f3f3f3" stroke="#1a1a1a" /><path d="M7 9 H15 L11 13 Z" fill="#e8a020" /><path d="M3 24 H9 M13 24 H19" stroke="#e8a020" strokeWidth="3" /></svg>
                    <svg width="22" height="24" viewBox="0 0 22 24" className="ml-[11px] shrink-0"><path d="M1 8 H6 L13 2 V22 L6 16 H1 Z" fill="#e29a6c" /><path d="M16 7 C19 10 19 14 16 17 M18 4 C22 9 22 15 18 20" stroke="#9aa" strokeWidth="1.5" fill="none" /></svg>
                    <div className="ml-[11px] w-[24px] h-[28px] rounded-full bg-[#e4c32b] border-[3px] border-[#5f9e35] flex items-center justify-center font-bold text-[#2f6e1c] text-[18px] leading-none shrink-0">+</div>
                    <svg width="22" height="26" viewBox="0 0 22 26" className="ml-[9px] shrink-0"><path d="M11 0 L22 4 V14 C22 20 16 24 11 26 C6 24 0 20 0 14 V4 Z" fill="#b8c2a8" /><path d="M11 4 L18 7 V14 C18 18 14 20 11 22 C8 20 4 18 4 14 V7 Z" fill="#4f8f3f" /><path d="M12 7 L8 14 H11 L10 19 L14 12 H11 Z" fill="#e8f0d8" /></svg>
                    <svg width="18" height="28" viewBox="0 0 18 28" className="ml-[21px] shrink-0"><rect x="5" y="1" width="8" height="16" rx="4" fill="none" stroke="#6f9cc4" strokeWidth="1.6" /><path d="M1 12 C1 24 17 24 17 12 M9 21 V27" fill="none" stroke="#6f9cc4" strokeWidth="1.6" /></svg>
                    <span className="ml-[23px] text-[21px] text-[#2b2b2b] font-['Noto_Sans_CJK_SC',sans-serif]">英</span>
                    <span className="ml-[32px] text-[21px] text-[#2b2b2b] font-['Noto_Sans_CJK_SC',sans-serif]">拼</span>
                    <svg width="26" height="26" viewBox="0 0 26 26" className="ml-[30px] shrink-0"><path d="M17 3 H2 V19 H18 V12 M6 24 H15 M10 19 V24" stroke="#333" strokeWidth="1.6" fill="none" /><rect x="17" y="0" width="6" height="10" rx="2" fill="none" stroke="#333" strokeWidth="1.5" /></svg>
                    <svg width="24" height="20" viewBox="0 0 24 20" className="ml-[9px] shrink-0"><path d="M1 7 H5 L11 2 V18 L5 13 H1 Z M14 6 C16 8 16 12 14 14 M17 4 C20 7 20 13 17 16 M20 2 C24 7 24 13 20 18" stroke="#333" strokeWidth="1.3" fill="none" /></svg>
                    <div className="ml-[18px] w-[92px] flex flex-col items-end text-[16px] leading-[21px] text-[#333] shrink-0">
                        <span>9:09</span>
                        <span className="whitespace-nowrap">2022-09-21</span>
                    </div>
                    <svg width="18" height="24" viewBox="0 0 18 24" className="ml-[15px] shrink-0"><path d="M9 1 C15 8 15 16 8 23 C5 23 2 21 1 17 C7 18 11 10 9 1 Z" stroke="#333" strokeWidth="1.4" fill="none" /></svg>
                </div>
            </div>
        </div>
    );
}
